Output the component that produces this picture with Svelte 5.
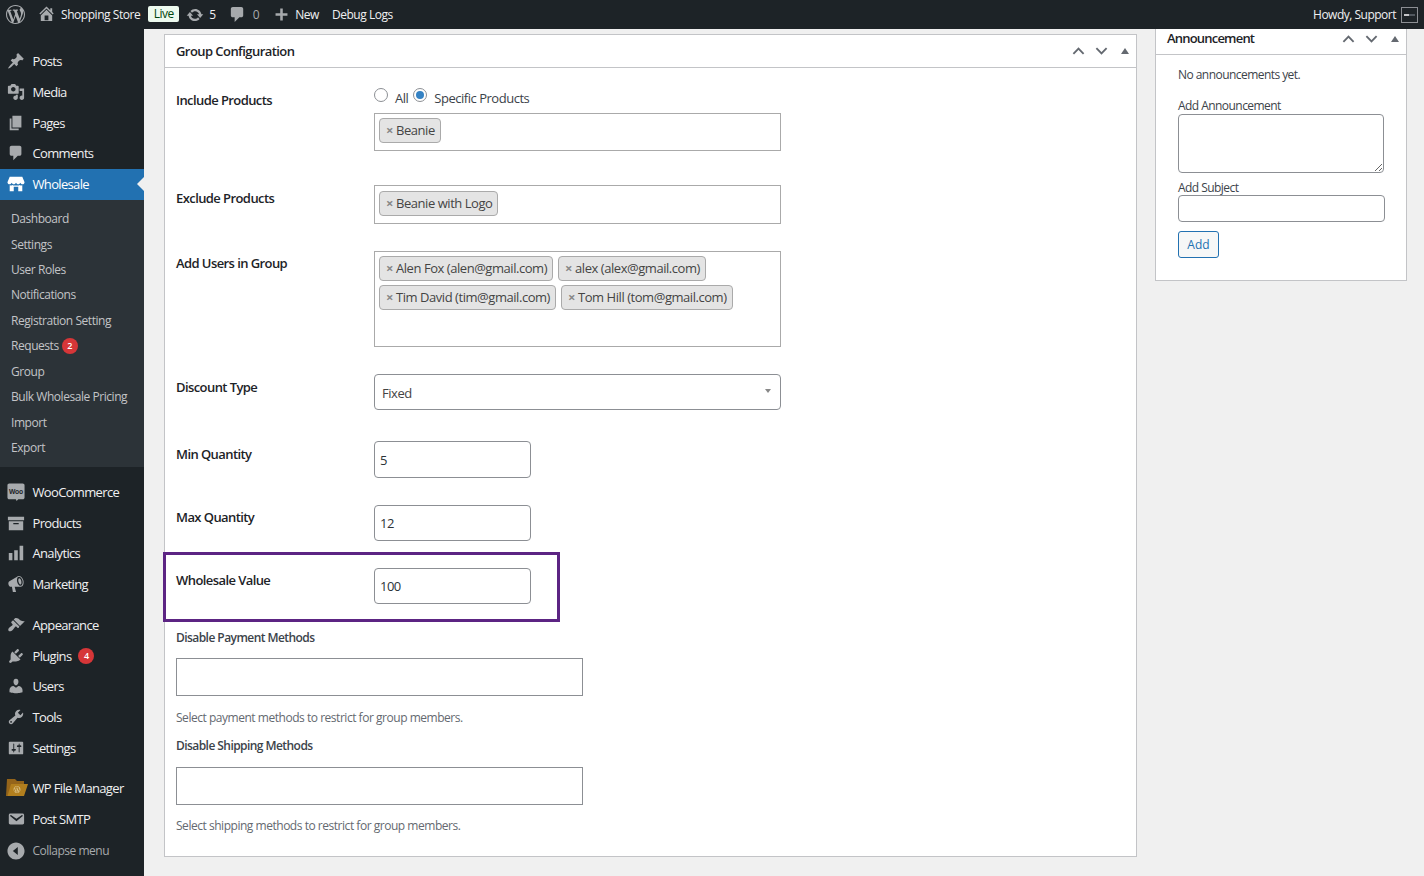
<script>
  const icons = {
    posts: "M10.44 3.02l1.82-1.82 6.36 6.35-1.83 1.82c-1.05-.68-2.48-.57-3.41.36l-.75.75c-.92.93-1.04 2.35-.35 3.41l-1.83 1.82-2.41-2.41-2.8 2.79c-.42.42-3.38 2.71-3.8 2.29s1.86-3.39 2.28-3.81l2.79-2.79L4.1 9.36l1.83-1.82c1.05.69 2.48.57 3.4-.36l.75-.75c.93-.92 1.05-2.35.36-3.41z",
    media: "M13 11V4c0-.55-.45-1-1-1h-1.67L9 1H5L3.67 3H2c-.55 0-1 .45-1 1v7c0 .55.45 1 1 1h10c.55 0 1-.45 1-1zM7 4.5c1.38 0 2.5 1.12 2.5 2.5S8.38 9.5 7 9.5 4.5 8.38 4.5 7 5.62 4.5 7 4.5zM14 6h5v10.5c0 1.38-1.12 2.5-2.5 2.5S14 17.88 14 16.5s1.12-2.5 2.5-2.5c.17 0 .34.02.5.05V9h-3V6zm-4 8.05V13h2v3.5c0 1.38-1.12 2.5-2.5 2.5S7 17.88 7 16.5 8.12 14 9.5 14c.17 0 .34.02.5.05z",
    pages: "M6 15V2h10v13H6zm-1 1h8v2H3V5h2v11z",
    comment: "M5 2h9c1.1 0 2 .9 2 2v7c0 1.1-.9 2-2 2h-2l-5 5v-5H5c-1.1 0-2-.9-2-2V4c0-1.1.9-2 2-2z",
    store: "M3 2h14l2.5 6c0 1.3-1 2.4-2.4 2.4-1.1 0-2-.7-2.3-1.7-.3 1-1.300 1.700-2.400 1.700s-2-.7-2.400-1.700c-.4 1-1.300 1.700-2.400 1.700s-2.100-.7-2.400-1.700c-.3 1-1.200 1.700-2.300 1.700C1.500 10.400.5 9.300.5 8zM3 11.500c1 .3 2 .1 2.800-.5.7.5 1.500.7 2.200.7h4c.8 0 1.500-.2 2.200-.7.8.6 1.800.8 2.800.5V18h-4.500v-5h-5v5H3z",
    products: "M19 3v4H1V3h18zM2 8h16v10H2V8zm5 2v1.500h6V10H7z",
    analytics: "M18 18V2h-4v16h4zm-6 0V7H8v11h4zm-6 0v-8H2v8h4z",
    marketing: "M18.150 5.940c.46 1.620.38 3.220-.02 4.480-.42 1.280-1.260 2.180-2.300 2.480-.16.06-.26.06-.4.06-.06.02-.12.02-.18.02-.06.02-.14.02-.22.02H8.500l1.500 5.500c.02.14-.06.26-.14.34-.08.1-.24.16-.34.16H6.950c-.1 0-.26-.06-.34-.16-.08-.08-.16-.2-.14-.34l-1-5.500H4.250c-.5.06-1.080-.18-1.540-.62s-.88-1.080-1.060-1.880c-.24-.8-.2-1.560-.02-2.200.18-.62.58-1.080 1.060-1.300l9-5.420c.1-.06.18-.1.24-.16.23-.14.46-.22.74-.3 1.040-.3 2.240.1 3.220.98s1.840 2.240 2.260 3.860zm-2.600 5.980c.4-.1.74-.34 1.040-.7.58-.7.86-1.760.86-3.040 0-.64-.1-1.300-.26-1.980-.34-1.360-1.020-2.500-1.780-3.240s-1.680-1.100-2.460-.88c-.82.22-1.400.96-1.700 2-.32 1.040-.28 2.360.06 3.720.38 1.360 1 2.500 1.800 3.240.78.74 1.620 1.100 2.440.88zM15.190 10.440c-.5.150-1.200-.4-1.600-1.120-.38-.62-.68-1.360-.88-2.160-.4-1.600-.1-3.200.68-3.500.8-.2 1.600.8 2.100 2 .34.780.54 1.620.56 2.380.04 1.200-.2 2.200-.86 2.400z",
    appearance: "M14.480 11.060L7.410 3.990l1.500-1.500c.5-.56 2.300-.47 3.510.32 1.210.8 1.430 1.280 2.910 2.100 1.180.64 2.450 1.260 4.450.85zm-.71.71L6.700 4.700 4.930 6.470c-.39.39-.39 1.020 0 1.410l1.060 1.060c.39.39.39 1.030 0 1.420-.6.6-1.430 1.110-2.210 1.690-.35.26-.7.53-1.010.84C1.430 13.710.96 15.650 1.910 16.600c.94.94 2.880.47 4.670-1.330.31-.31.58-.66.85-1.010.57-.78 1.080-1.610 1.690-2.210.39-.39 1.020-.39 1.410 0l1.060 1.060c.39.39 1.020.39 1.410 0z",
    plugins: "M13.110 4.360L9.870 7.600 8 5.730l3.240-3.240c.35-.34 1.050-.2 1.560.32.52.51.66 1.210.31 1.550zm-8 1.770l.91-1.120 9.010 9.010-1.190.84c-.71.71-2.630 1.160-3.820 1.160H6.140L4.900 17.260c-.59.59-1.540.59-2.120 0-.59-.58-.59-1.530 0-2.120l1.240-1.240v-3.880c0-1.130.4-3.190 1.090-3.890zm7.260 3.970l3.240-3.240c.34-.35 1.040-.21 1.550.31.52.51.66 1.210.31 1.550l-3.240 3.250z",
    users: "M10 9.250c-2.270 0-2.730-3.440-2.730-3.440C7 4.020 7.820 2 9.970 2c2.160 0 2.980 2.020 2.710 3.810 0 0-.41 3.440-2.680 3.440zm0 2.570L12.720 10c2.390 0 4.520 2.330 4.520 4.530v2.490s-3.650 1.130-7.240 1.130c-3.650 0-7.240-1.130-7.240-1.130v-2.490c0-2.250 1.940-4.480 4.470-4.480z",
    tools: "M16.680 9.770c-1.340 1.340-3.300 1.670-4.950.99l-5.410 6.520c-.99.99-2.590.99-3.580 0s-.99-2.590 0-3.570l6.520-5.420c-.68-1.650-.35-3.610.99-4.950 1.280-1.280 3.120-1.620 4.720-1.060l-2.890 2.890 2.820 2.820 2.860-2.870c.53 1.580.18 3.390-1.080 4.650zM3.810 16.210c.4.39 1.040.39 1.430 0 .4-.4.4-1.040 0-1.430-.39-.4-1.030-.4-1.430 0-.39.39-.39 1.030 0 1.430z",
    settings: "M18 16V4c0-.55-.45-1-1-1H3c-.55 0-1 .45-1 1v12c0 .55.45 1 1 1h14c.55 0 1-.45 1-1zM8 11h1c.55 0 1 .45 1 1s-.45 1-1 1H8v1.500c0 .28-.22.5-.5.5s-.5-.22-.5-.5V13H6c-.55 0-1-.45-1-1s.45-1 1-1h1V5.500c0-.28.22-.5.5-.5s.5.22.5.5V11zm5-2h-1c-.55 0-1-.45-1-1s.45-1 1-1h1V5.500c0-.28.22-.5.5-.5s.5.22.5.5V7h1c.55 0 1 .45 1 1s-.45 1-1 1h-1v5.500c0 .28-.22.5-.5.5s-.5-.22-.5-.5V9z",
    email: "M3.870 4h13.250C18.370 4 19 4.590 19 5.790v8.420c0 1.190-.63 1.790-1.880 1.790H3.870c-1.250 0-1.880-.6-1.880-1.790V5.790c0-1.200.63-1.790 1.880-1.790zm6.620 8.600l6.740-5.530c.24-.2.43-.66.13-1.070-.29-.41-.82-.42-1.170-.17l-5.700 3.860L4.800 5.830c-.35-.25-.88-.24-1.170.17-.3.41-.11.87.13 1.070z",
    collapse: "M10 .5c5.250 0 9.500 4.250 9.500 9.500s-4.250 9.500-9.500 9.500S.5 15.250.5 10 4.750.5 10 .5zM12 5.500L6.500 10l5.500 4.500z"
  };
  const wp = "M20 10c0-5.510-4.490-10-10-10C4.480 0 0 4.490 0 10c0 5.520 4.480 10 10 10 5.510 0 10-4.480 10-10zM7.780 15.370L4.370 6.220c.55-.02 1.170-.08 1.170-.08.5-.06.44-1.130-.06-1.110 0 0-1.450.11-2.370.11-.18 0-.37 0-.58-.01C4.120 2.690 6.870 1.110 10 1.110c2.330 0 4.450.87 6.050 2.340-.68-.11-1.650.39-1.650 1.580 0 .74.45 1.360.9 2.100.35.61.55 1.360.55 2.460 0 1.490-1.400 5-1.400 5l-3.030-8.370c.54-.02.82-.17.82-.17.5-.05.44-1.250-.06-1.220 0 0-1.440.12-2.380.12-.87 0-2.330-.12-2.330-.12-.5-.03-.56 1.200-.06 1.220l.92.08 1.260 3.410zM17.410 10c.24-.64.74-1.870.43-4.250.7 1.290 1.050 2.710 1.050 4.250 0 3.290-1.730 6.240-4.400 7.780.97-2.590 1.940-5.200 2.920-7.780zM6.100 18.090C3.120 16.650 1.110 13.530 1.110 10c0-1.300.23-2.480.72-3.590C3.250 10.300 4.670 14.200 6.100 18.090zm4.030-6.630l2.580 6.980c-.86.29-1.760.45-2.710.45-.79 0-1.570-.11-2.290-.33.81-2.380 1.620-4.740 2.420-7.100z";

  const group1 = [
    { label: "Posts", icon: "posts" },
    { label: "Media", icon: "media" },
    { label: "Pages", icon: "pages" },
    { label: "Comments", icon: "comment" }
  ];
  const subItems = ["Dashboard", "Settings", "User Roles", "Notifications", "Registration Setting", "Requests", "Group", "Bulk Wholesale Pricing", "Import", "Export"];
  const group2 = [
    { label: "WooCommerce", icon: "woo" },
    { label: "Products", icon: "products" },
    { label: "Analytics", icon: "analytics" },
    { label: "Marketing", icon: "marketing" }
  ];
  const group3 = [
    { label: "Appearance", icon: "appearance" },
    { label: "Plugins", icon: "plugins", badge: 4 },
    { label: "Users", icon: "users" },
    { label: "Tools", icon: "tools" },
    { label: "Settings", icon: "settings" }
  ];
  const group4 = [
    { label: "WP File Manager", icon: "folder" },
    { label: "Post SMTP", icon: "email" }
  ];
  const menuGroups = [group2, group3, group4];
</script>

{#snippet menuItem(item)}
  <a class="item" href="#top">
    {#if item.icon === "woo"}
      <svg class="ico" viewBox="0 0 20 20"><path d="M2.500 .5h15c1.100 0 2 .9 2 2v13.500c0 1.100-.9 2-2 2h-5l-1.800 2-.9-2H2.500c-1.100 0-2-.9-2-2V2.500c0-1.100.9-2 2-2z" fill="#a7aaad" /><text x="10" y="11.800" class="woo-text">Woo</text></svg>
    {:else if item.icon === "folder"}
      <svg class="ico folder" viewBox="0 0 22 18"><path d="M1 0h8l2 2h7v3H6L3 17H0z" fill="#94641a" /><path d="M5 5h17l-4 12H1.500z" fill="#b27f1e" /><g transform="translate(7.500 7) scale(.35)"><path d={wp} fill="#dcc48c" fill-rule="evenodd" /></g></svg>
    {:else}
      <svg class="ico" viewBox="0 0 20 20"><path d={icons[item.icon]} fill-rule="evenodd" /></svg>
    {/if}
    <span>{item.label}</span>
    {#if item.badge}<b class="badge">{item.badge}</b>{/if}
  </a>
{/snippet}

{#snippet handles()}
  <div class="handles">
    <svg viewBox="0 0 14 8" class="chev"><path d="M1.500 7L7 1.500 12.500 7" /></svg>
    <svg viewBox="0 0 14 8" class="chev"><path d="M1.500 1L7 6.500 12.500 1" /></svg>
    <svg viewBox="0 0 8 6" class="tri"><path d="M4 0l4 6H0z" /></svg>
  </div>
{/snippet}

{#snippet tag(text)}
  <span class="tag"><i>×</i>{text}</span>
{/snippet}

<div class="page">
  <header class="adminbar">
    <svg class="bar-ico wp" viewBox="0 0 20 20"><path d={wp} fill-rule="evenodd" /></svg>
    <svg class="bar-ico home" viewBox="0 0 20 20"><path d="M16 8.500l1.530 1.530-1.060 1.060L10 4.620l-6.470 6.470-1.060-1.060L10 2.500l4 4v-2h2v4zm-6-2.460l6 5.990V18H4v-5.970zM12 17v-5H8v5h4z" fill-rule="evenodd" /></svg>
    <span class="site">Shopping Store</span>
    <span class="live">Live</span>
    <svg class="bar-ico update" viewBox="0 0 20 20"><path d="M10.200 3.280c3.530 0 6.430 2.610 6.920 6h2.080l-3.500 4-3.500-4h2.320c-.45-1.970-2.210-3.450-4.320-3.450-1.450 0-2.730.71-3.540 1.780L4.950 5.660C6.230 4.200 8.110 3.280 10.200 3.280zm-.4 13.440c-3.520 0-6.430-2.610-6.920-6H.8l3.500-4c1.170 1.330 2.330 2.670 3.500 4H5.480c.45 1.970 2.210 3.450 4.320 3.450 1.450 0 2.730-.71 3.540-1.780l1.710 1.950c-1.280 1.460-3.150 2.380-5.250 2.380z" /></svg>
    <span class="count">5</span>
    <svg class="bar-ico bubble" viewBox="0 0 20 20"><path d={icons.comment} /></svg>
    <span class="count zero">0</span>
    <svg class="bar-ico plus" viewBox="0 0 20 20"><path d="M17 8.500v3h-5.500V17h-3v-5.500H3v-3h5.500V3h3v5.500z" /></svg>
    <span class="new">New</span>
    <span class="debug">Debug Logs</span>
    <span class="howdy">Howdy, Support</span>
    <span class="avatar"><span></span></span>
  </header>

  <div class="shell">
    <nav class="sidebar">
      <div class="group first">
        {#each group1 as item}
          {@render menuItem(item)}
        {/each}
      </div>
      <a class="item active" href="#top">
        <svg class="ico" viewBox="0 0 20 20"><path d={icons.store} fill-rule="evenodd" /></svg>
        <span>Wholesale</span>
      </a>
      <div class="submenu">
        {#each subItems as sub}
          <a class="subitem" href="#top">{sub}{#if sub === "Requests"}<b class="badge">2</b>{/if}</a>
        {/each}
      </div>
      {#each menuGroups as group, i}
        <div class="group g{i}">
          {#each group as item}
            {@render menuItem(item)}
          {/each}
        </div>
      {/each}
      <div class="item collapse">
        <svg class="ico" viewBox="0 0 20 20"><path d={icons.collapse} fill-rule="evenodd" /></svg>
        <span>Collapse menu</span>
      </div>
    </nav>

    <main class="content">
      <section class="card main-card">
        <div class="card-head">
          <h2>Group Configuration</h2>
          {@render handles()}
        </div>
        <div class="form">
          <div class="row r-include">
            <div class="label">Include Products</div>
            <div class="field">
              <div class="radios">
                <input type="radio" name="scope" />
                <span class="all">All</span>
                <input type="radio" name="scope" checked />
                <span class="spec">Specific Products</span>
              </div>
              <div class="tags h38">{@render tag("Beanie")}</div>
            </div>
          </div>
          <div class="row r-exclude">
            <div class="label low">Exclude Products</div>
            <div class="field"><div class="tags h39">{@render tag("Beanie with Logo")}</div></div>
          </div>
          <div class="row r-std">
            <div class="label">Add Users in Group</div>
            <div class="field">
              <div class="tags h96">
                {@render tag("Alen Fox (alen@gmail.com)")}
                {@render tag("alex (alex@gmail.com)")}
                {@render tag("Tim David (tim@gmail.com)")}
                {@render tag("Tom Hill (tom@gmail.com)")}
              </div>
            </div>
          </div>
          <div class="row r-std">
            <div class="label low">Discount Type</div>
            <div class="field">
              <div class="select">Fixed<span class="caret"></span></div>
            </div>
          </div>
          <div class="row r-min">
            <div class="label low">Min Quantity</div>
            <div class="field"><input class="num h37" value="5" /></div>
          </div>
          <div class="row r-std">
            <div class="label">Max Quantity</div>
            <div class="field"><input class="num" value="12" /></div>
          </div>
          <div class="row r-std marked">
            <div class="label">Wholesale Value</div>
            <div class="field"><input class="num" value="100" /></div>
            <div class="mark"></div>
          </div>
          <div class="block b-pay">
            <div class="block-label">Disable Payment Methods</div>
            <div class="wide"></div>
            <p>Select payment methods to restrict for group members.</p>
          </div>
          <div class="block b-ship">
            <div class="block-label">Disable Shipping Methods</div>
            <div class="wide"></div>
            <p>Select shipping methods to restrict for group members.</p>
          </div>
        </div>
      </section>

      <aside class="card side-card">
        <div class="card-head side-head">
          <h2>Announcement</h2>
          {@render handles()}
        </div>
        <div class="side-body">
          <p class="none">No announcements yet.</p>
          <div class="side-label first-label">Add Announcement</div>
          <textarea></textarea>
          <div class="side-label subject-label">Add Subject</div>
          <input class="subject" />
          <button>Add</button>
        </div>
      </aside>
    </main>
  </div>
</div>

<style>
  :global(body) {
    margin: 0;
    background: #f0f0f0;
  }

  .page {
    width: 1424px;
    height: 876px;
    overflow: hidden;
    display: flex;
    flex-direction: column;
    font-family: "Open Sans", "Liberation Sans", sans-serif;
    font-size: 13px;
    letter-spacing: -0.45px;
    color: #3c434a;
  }

  .adminbar {
    height: 29px;
    flex: none;
    background: #1d2327;
    color: #f0f0f1;
    display: flex;
    align-items: center;
    padding: 0 6px;
    font-size: 12px;
  }

  .bar-ico {
    fill: #a7aaad;
    flex: none;
  }

  .wp { width: 19px; height: 19px; margin-right: 12px; }
  .home { width: 19px; height: 19px; margin-right: 5px; margin-top: -2px; }
  .site { margin-right: 8px; }

  .live {
    background: #edfaef;
    color: #00450c;
    border-radius: 2px;
    height: 16px;
    line-height: 15px;
    width: 31px;
    text-align: center;
    margin-right: 7px;
    margin-top: -1px;
  }

  .update { width: 18px; height: 18px; margin-right: 5px; }
  .count { margin-right: 12px; }
  .count.zero { color: #a7aaad; margin-right: 14px; }
  .bubble { width: 19px; height: 19px; margin-right: 6px; }
  .plus { width: 17px; height: 17px; margin-right: 5px; }
  .new { margin-right: 13px; }

  .howdy { margin-left: auto; margin-right: 5px; letter-spacing: -0.5px; }

  .avatar {
    width: 17px;
    height: 16px;
    box-sizing: border-box;
    border: 1px solid #8c8f94;
    background: #1d2327;
    display: flex;
    align-items: center;
    justify-content: center;
  }

  .avatar span {
    width: 11px;
    height: 2px;
    background: linear-gradient(to right, #c3c4c7 45%, #50575e 45%);
  }

  .shell {
    flex: 1;
    display: flex;
    min-height: 0;
  }

  .sidebar {
    width: 144px;
    flex: none;
    background: #1d2327;
    letter-spacing: -0.66px;
  }

  .group.first { margin-top: 17px; }
  .group.g0 { margin-top: 9.670px; }
  .group.g1 { margin-top: 10.330px; }
  .group.g2 { margin-top: 10px; }

  .item {
    height: 30.670px;
    display: flex;
    align-items: center;
    color: #f0f0f1;
    text-decoration: none;
    padding-left: 7px;
  }

  .ico {
    width: 18px;
    height: 18px;
    fill: #a7aaad;
    flex: none;
    margin-right: 7.500px;
  }

  .folder {
    width: 22px;
    height: 18px;
    margin-left: -1px;
    margin-right: 4.500px;
  }

  .woo-text {
    font-family: "Liberation Sans", sans-serif;
    font-size: 7.500px;
    font-weight: 700;
    letter-spacing: -0.2px;
    text-anchor: middle;
    fill: #1d2327;
  }

  .active {
    background: #2271b1;
    color: #fff;
    position: relative;
    height: 31px;
  }

  .active .ico { fill: #fff; }

  .active::after {
    content: "";
    position: absolute;
    right: 0;
    top: 8px;
    border: 7.500px solid transparent;
    border-right-color: #f0f0f0;
    border-left-width: 0;
  }

  .submenu {
    background: #2c3338;
    padding: 6.300px 0 6.700px;
  }

  .subitem {
    height: 25.440px;
    display: flex;
    align-items: center;
    padding-left: 11px;
    color: #c3c4c7;
    text-decoration: none;
    font-size: 12px;
    letter-spacing: -0.45px;
  }

  .badge {
    width: 16px;
    height: 16px;
    border-radius: 50%;
    background: #d63638;
    color: #fff;
    font-size: 9px;
    font-weight: 600;
    letter-spacing: 0;
    display: flex;
    align-items: center;
    justify-content: center;
    margin-left: 7px;
  }

  .subitem .badge { margin-left: 3px; }

  .collapse {
    color: #a7aaad;
    font-size: 12px;
    letter-spacing: -0.5px;
    margin-top: 1px;
  }

  .content {
    flex: 1;
    display: flex;
    gap: 18px;
    align-items: flex-start;
    padding-left: 20px;
    min-width: 0;
  }

  .card {
    background: #fff;
    border: 1px solid #c3c4c7;
    box-sizing: border-box;
  }

  .main-card {
    width: 973px;
    height: 823px;
    margin-top: 5px;
  }

  .card-head {
    height: 32px;
    border-bottom: 1px solid #c3c4c7;
    display: flex;
    align-items: center;
    justify-content: space-between;
    padding: 0 7px 0 11px;
  }

  h2 {
    margin: 0;
    font-size: 13px;
    font-weight: 600;
    letter-spacing: -0.56px;
    color: #1d2327;
  }

  .side-head h2 {
    letter-spacing: -0.8px;
    margin-top: -2px;
  }

  .handles {
    display: flex;
    align-items: center;
    gap: 10px;
  }

  .chev {
    width: 13px;
    height: 8px;
    fill: none;
    stroke: #646970;
    stroke-width: 2;
  }

  .tri {
    width: 8px;
    height: 6px;
    margin-left: 3px;
    fill: #646970;
  }

  .form { padding: 0 11px; }

  .row {
    display: grid;
    grid-template-columns: 198px 407px;
    position: relative;
  }

  .r-include { margin-top: 20px; }
  .r-exclude { margin-top: 34px; }
  .r-std { margin-top: 27px; }
  .r-min { margin-top: 31px; }

  .label {
    font-weight: 600;
    letter-spacing: -0.58px;
    color: #1d2327;
    line-height: 20px;
    padding-top: 2px;
  }

  .label.low { padding-top: 3px; }

  .radios {
    height: 25px;
    margin-top: -4px;
    margin-bottom: 4px;
    display: flex;
    align-items: center;
    letter-spacing: -0.48px;
  }

  .radios span { padding-top: 3px; }

  input[type="radio"] {
    appearance: none;
    width: 14px;
    height: 14px;
    border: 1px solid #8c8f94;
    border-radius: 50%;
    margin: 0;
    background: #fff;
    position: relative;
    top: -1.500px;
  }

  input[type="radio"]:checked::before {
    content: "";
    position: absolute;
    inset: 2px;
    border-radius: 50%;
    background: #3582c4;
  }

  .all { margin: 0 5px 0 7px; }
  .spec { margin-left: 7px; }

  .tags {
    border: 1px solid #aaa;
    box-sizing: border-box;
    padding: 4px 4px 0;
    display: flex;
    flex-wrap: wrap;
    align-content: flex-start;
    gap: 4px 5px;
  }

  .h38 { height: 38px; }
  .h39 { height: 39px; padding-top: 5px; }
  .h96 { height: 96px; }

  .tag {
    height: 25px;
    box-sizing: border-box;
    background: #e4e4e4;
    border: 1px solid #aaa;
    border-radius: 4px;
    padding: 0 5px 1px 6px;
    display: flex;
    align-items: center;
    color: #444;
  }

  .tag i {
    font-style: normal;
    color: #888;
    font-weight: 700;
    font-size: 13px;
    margin-right: 3px;
  }

  .select {
    height: 36px;
    box-sizing: border-box;
    border: 1px solid #8c8f94;
    border-radius: 4px;
    padding: 2px 0 0 7px;
    display: flex;
    align-items: center;
    position: relative;
    color: #444;
  }

  .caret {
    position: absolute;
    right: 9px;
    top: 14px;
    border: 3.500px solid transparent;
    border-top: 4px solid #888;
    border-bottom: 0;
  }

  .num {
    display: block;
    width: 157px;
    height: 36px;
    box-sizing: border-box;
    border: 1px solid #8c8f94;
    border-radius: 4px;
    padding: 0 5px;
    font: inherit;
    letter-spacing: -0.5px;
    color: #2c3338;
    background: #fff;
    margin: 0;
  }

  .h37 { height: 37px; }

  .mark {
    position: absolute;
    left: -13px;
    top: -16px;
    width: 397px;
    height: 70px;
    box-sizing: border-box;
    border: 3px solid #5c2483;
  }

  .block-label {
    font-weight: 600;
    font-size: 12px;
    letter-spacing: -0.56px;
    color: #3c434a;
    line-height: 18px;
  }

  .b-pay { margin-top: 25px; }
  .b-ship { margin-top: 10px; }

  .wide {
    width: 407px;
    height: 38px;
    box-sizing: border-box;
    border: 1px solid #8c8f94;
    margin-top: 11px;
  }

  .b-ship .wide { margin-top: 12px; }

  .block p {
    margin: 13px 0 0;
    font-size: 12px;
    letter-spacing: -0.47px;
    line-height: 18px;
    color: #646970;
  }

  .b-ship p { margin-top: 12px; }

  .side-card {
    width: 252px;
    height: 252px;
    border-top: 0;
  }

  .side-head {
    height: 26px;
    padding-bottom: 6px;
    box-sizing: border-box;
  }

  .side-body {
    padding: 0 21px 0 22px;
    display: flex;
    flex-direction: column;
    align-items: flex-start;
    font-size: 12px;
    letter-spacing: -0.55px;
  }

  .none {
    margin: 11px 0 0;
    line-height: 18px;
  }

  .side-label {
    line-height: 16px;
  }

  .first-label { margin-top: 14px; }
  .subject-label { margin-top: 7px; height: 15px; }

  textarea {
    width: 206px;
    height: 59px;
    box-sizing: border-box;
    border: 1px solid #8c8f94;
    border-radius: 4px;
    margin: 0;
    padding: 2px 6px;
    display: block;
    background: #fff;
  }

  .subject {
    width: 207px;
    height: 27px;
    box-sizing: border-box;
    border: 1px solid #8c8f94;
    border-radius: 4px;
    margin: 0;
    padding: 0 6px;
    background: #fff;
  }

  button {
    margin-top: 9px;
    width: 41px;
    height: 27px;
    box-sizing: border-box;
    border: 1px solid #2271b1;
    border-radius: 3px;
    background: #f6f7f7;
    color: #2271b1;
    font: inherit;
    padding: 0;
  }
</style>
